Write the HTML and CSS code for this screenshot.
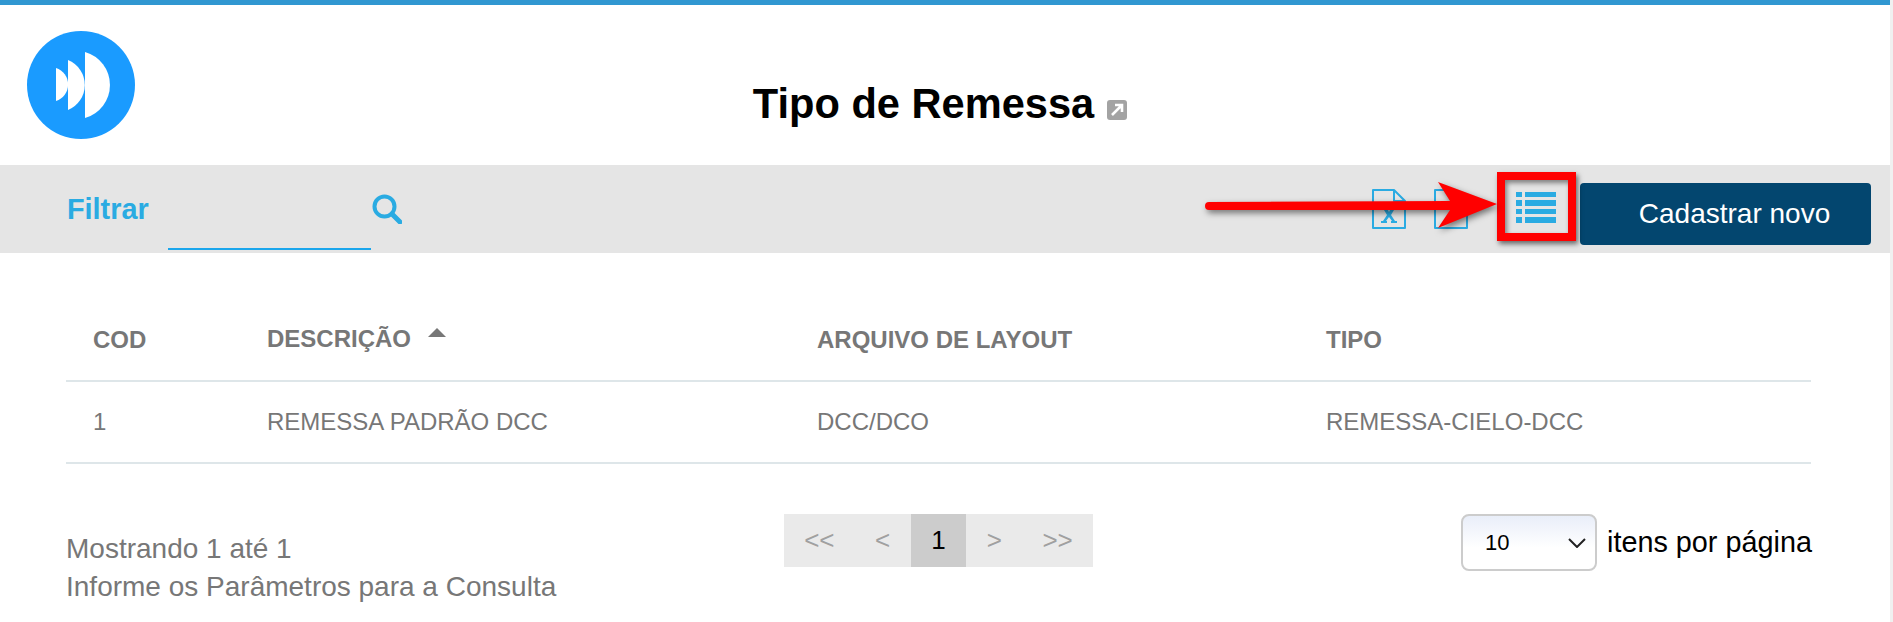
FILE: index.html
```html
<!doctype html>
<html lang="pt-BR">
  <head>
    <meta charset="UTF-8" />
    <title>Tipo de Remessa</title>
    <link rel="stylesheet" href="styles.css">
  </head>
  <body>
    <div class="page">
      <header class="top">
        <svg class="logo" viewBox="0 0 108 108" width="108" height="108">
          <circle cx="54" cy="54" r="54" fill="#1a9bff" />
          <path d="M29 37 A17.3 17.3 0 0 1 29 70 Z" fill="#fff" />
          <path d="M41 29 A27 27 0 0 1 41 79 Z" fill="#fff" />
          <path d="M58 21 A34.3 34.3 0 0 1 58 87 Z" fill="#fff" />
        </svg>
        <h1>Tipo de Remessa</h1>
        <svg class="open-icon" viewBox="0 0 20 20" width="20" height="20">
          <rect width="20" height="20" rx="3" fill="#a3a3a3" />
          <path d="M5 15 L14 6 M8 5 H15 V12" fill="none" stroke="#fff" stroke-width="2.6" />
        </svg>
      </header>

      <section class="toolbar">
        <label class="filter-label" for="filtro">Filtrar</label>
        <input class="filter-input" id="filtro" type="text" />
        <svg class="search-icon" viewBox="0 0 30 30" width="30" height="30">
          <circle cx="12.5" cy="12.5" r="10" fill="none" stroke="#2aabe2" stroke-width="4" />
          <path d="M20 20 L28 28" stroke="#2aabe2" stroke-width="5" stroke-linecap="round" />
        </svg>
        <div class="tools">
          <svg class="file-icon" viewBox="0 0 34 40" width="34" height="40">
            <path d="M1 1 H22 L33 12 V39 H1 Z M22 1 V12 H33" fill="none" stroke="#2aabe2" stroke-width="2" stroke-linejoin="round" />
            <path d="M9 19 H15 L17 23 L19 19 H25 V21 H22 L19 26 L23 32 H25 V34 H19 V32 H20 L17 28 L14 32 H15 V34 H9 V32 H11 L15 26 L12 21 H9 Z" fill="#2aabe2" />
          </svg>
          <svg class="file-icon" viewBox="0 0 34 40" width="34" height="40">
            <path d="M1 1 H22 L33 12 V39 H1 Z M22 1 V12 H33" fill="none" stroke="#2aabe2" stroke-width="2" stroke-linejoin="round" />
          </svg>
          <svg class="list-icon" viewBox="0 0 40 31" width="40" height="31">
            <path d="M0 0 H6 V5 H0 Z M9 0 H40 V5 H9 Z M0 8 H6 V14 H0 Z M9 8 H40 V14 H9 Z M0 17 H6 V22 H0 Z M9 17 H40 V22 H9 Z M0 25 H6 V31 H0 Z M9 25 H40 V31 H9 Z" fill="#2aabe2" />
          </svg>
          <button class="btn-new">Cadastrar novo</button>
        </div>
      </section>

      <table class="grid">
        <thead>
          <tr>
            <th class="col-cod">COD</th>
            <th class="col-desc">DESCRIÇÃO <span class="sort-up"></span></th>
            <th class="col-file">ARQUIVO DE LAYOUT</th>
            <th>TIPO</th>
          </tr>
        </thead>
        <tbody>
          <tr>
            <td>1</td>
            <td>REMESSA PADRÃO DCC</td>
            <td>DCC/DCO</td>
            <td>REMESSA-CIELO-DCC</td>
          </tr>
        </tbody>
      </table>

      <footer class="foot">
        <div class="foot-info">
          <p>Mostrando 1 até 1</p>
          <p>Informe os Parâmetros para a Consulta</p>
        </div>
        <ul class="pager">
          <li class="wide">&lt;&lt;</li>
          <li>&lt;</li>
          <li class="active">1</li>
          <li>&gt;</li>
          <li class="wide">&gt;&gt;</li>
        </ul>
        <div class="per-page">
          <div class="fake-select">
            <span>10</span>
            <svg viewBox="0 0 18 10" width="18" height="10">
              <path d="M1 1 L9 9 L17 1" fill="none" stroke="#222" stroke-width="2" />
            </svg>
          </div>
          <span>itens por página</span>
        </div>
      </footer>
    </div>

    <!-- red annotation drawn over the screenshot -->
    <div class="mark-box"></div>
    <svg class="mark-arrow" viewBox="0 0 310 60" width="310" height="60">
      <path d="M9 22 L250 21 L238 2 L297 24 L238 48 L250 30 L9 30 Q5 30 5 26 Q5 22 9 22 Z" fill="#f00" />
    </svg>
  </body>
</html>
```
FILE: styles.css
```css
body {
  margin: 0;
  font-family: "Liberation Sans", Arial, sans-serif;
  background-color: #f0f0f0;
  color: #000;
}
.page {
  box-sizing: border-box;
  min-height: 100vh;
  margin-right: 3px;
  background-color: #fff;
  border-top: 5px solid #3097d1;
}

/* header */
.top {
  position: relative;
  height: 160px;
  display: flex;
  justify-content: center;
  align-items: center;
  gap: 13px;
}
.logo {
  position: absolute;
  left: 27px;
  top: 26px;
}
.top h1 {
  margin: 38px 0 0;
  font-size: 41.6px;
  line-height: 46px;
}
.open-icon {
  margin: 50px 10px 0 0;
}

/* toolbar */
.toolbar {
  height: 88px;
  padding: 0 19px 0 67px;
  background-color: #e5e5e5;
  display: flex;
  align-items: center;
}
.filter-label {
  width: 101px;
  color: #2aabe2;
  font-size: 28.8px;
  font-weight: bold;
}
.filter-input {
  align-self: flex-start;
  width: 203px;
  height: 85px;
  box-sizing: border-box;
  padding: 0;
  background: none;
  border: none;
  border-bottom: 2px solid #1ba6ec;
  outline: none;
}
.search-icon {
  margin-left: 1px;
}
.tools {
  margin-left: auto;
  display: flex;
  align-items: center;
}
.file-icon {
  margin-right: 28px;
}
.list-icon {
  margin: 0 24px 3px 20px;
}
.btn-new {
  width: 291px;
  height: 62px;
  margin-top: 10px;
  padding-left: 24px;
  background-color: #03466f;
  color: #fff;
  border: none;
  border-radius: 4px;
  font-family: inherit;
  font-size: 28px;
}

/* table */
.grid {
  width: 1745px;
  margin: 46px 0 0 66px;
  border-collapse: collapse;
  table-layout: fixed;
  color: #777;
  font-size: 24px;
}
.grid th,
.grid td {
  padding: 0 0 0 27px;
  text-align: left;
  border-bottom: 2px solid #dee6e9;
}
.grid th {
  height: 81px;
  font-weight: bold;
}
.grid td {
  height: 80px;
}
.col-cod {
  width: 147px;
}
.col-desc {
  width: 523px;
}
.col-file {
  width: 482px;
}
.sort-up {
  display: inline-block;
  margin: 0 0 17px 10px;
  border-left: 9px solid transparent;
  border-right: 9px solid transparent;
  border-bottom: 9px solid #777;
  vertical-align: middle;
}

/* footer */
.foot {
  display: grid;
  grid-template-columns: 718px 677px 1fr;
  width: 1745px;
  margin: 50px 0 0 66px;
}
.foot-info {
  padding-top: 16px;
  color: #777;
  font-size: 28px;
  line-height: 38px;
}
.foot-info p {
  margin: 0;
}
.pager {
  margin: 0;
  padding: 0;
  width: 309px;
  height: 53px;
  list-style: none;
  display: flex;
  background-color: #eaeaea;
  color: #a0a0a0;
  font-size: 26px;
}
.pager li {
  width: 56px;
  display: flex;
  justify-content: center;
  align-items: center;
}
.pager .wide {
  width: 71px;
}
.pager .active {
  background-color: #ccc;
  color: #000;
}
.per-page {
  display: flex;
  align-items: center;
  gap: 10px;
  height: 57px;
  font-size: 28.8px;
  white-space: nowrap;
}
.fake-select {
  flex: none;
  width: 136px;
  height: 57px;
  box-sizing: border-box;
  padding: 0 9px 0 22px;
  border: 2px solid #ccc;
  border-radius: 8px;
  background: linear-gradient(#e9eef9, #fff 60%);
  display: flex;
  justify-content: space-between;
  align-items: center;
  font-size: 22px;
}

/* annotation */
.mark-box {
  position: absolute;
  left: 1497px;
  top: 172px;
  width: 79px;
  height: 69px;
  box-sizing: border-box;
  border: 8px solid #f00;
  box-shadow: 2px 3px 5px rgba(0, 0, 0, 0.55), inset 2px 3px 5px rgba(0, 0, 0, 0.45);
}
.mark-arrow {
  position: absolute;
  left: 1200px;
  top: 180px;
  filter: drop-shadow(2px 3px 3px rgba(0, 0, 0, 0.5));
}
```
